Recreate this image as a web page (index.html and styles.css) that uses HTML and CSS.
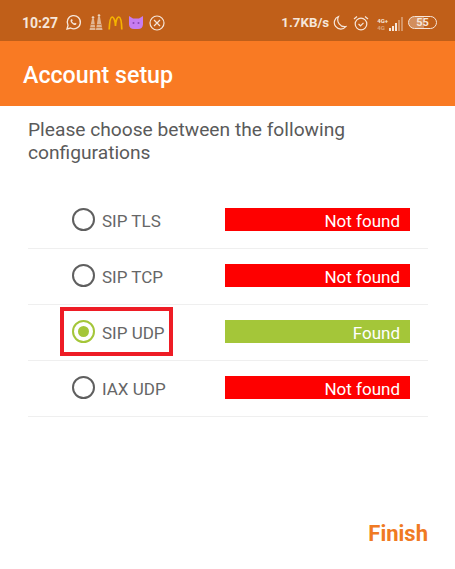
FILE: index.html
```html
<!DOCTYPE html>
<html lang="en">
<head>
    <meta charset="UTF-8">
    <meta name="viewport" content="width=device-width, initial-scale=1.0">
    <title>Account setup</title>
    <link rel="stylesheet" href="styles.css">
</head>
<body>
<div class="status-bar">
    <div class="status-left">
        <span class="status-time">10:27</span>
        <svg class="ic" width="17" height="17" viewBox="0 0 17 17" fill="none" stroke="#f6e6da" stroke-width="1.3"><path d="M2 15l1-3.600A6.600 6.600 0 1 1 5.600 14z"/><path d="M6 5.500c-.8.8-.6 2 .6 3.400s2.600 2.300 3.700 2.100c.8-.2 1.200-.8 1.200-1.400l-1.600-.8-.7.7c-.9-.3-1.800-1.200-2.200-2.200l.7-.7-.7-1.500z" fill="#f6e6da" stroke="none"/></svg>
        <svg class="ic ic-people" width="14" height="17" viewBox="0 0 14 17" fill="#ecd3bd"><path d="M3 5h2l1.500 11H.5z" opacity=".75"/><path d="M9 3h2l2.500 13H7z" opacity=".75"/><circle cx="4" cy="3.500" r="1.300"/><circle cx="10" cy="1.500" r="1.300"/><path d="M1 13h12v1H1zM2 10h10v1H2z" fill="#c05f19" opacity=".6"/></svg>
        <svg class="ic ic-mc" width="15" height="14" viewBox="0 0 15 14" fill="none" stroke="#f5b400" stroke-width="1.700"><path d="M1.200 13.500C1.500 6 2.500 1 4.200 1S7.500 6 7.500 10C7.500 6 9 1 10.800 1s2.800 5 3 12.500"/></svg>
        <svg class="ic ic-cat" width="16" height="15" viewBox="0 0 16 15"><path d="M1 1l4 2.500h6L15 1v8.500a5 5 0 0 1-5 4.500H6a5 5 0 0 1-5-4.500z" fill="#c77df0"/><circle cx="5.500" cy="8" r="1" fill="#8a45b5"/><circle cx="10.500" cy="8" r="1" fill="#8a45b5"/></svg>
        <svg class="ic" width="16" height="16" viewBox="0 0 16 16" fill="none" stroke="#f6e6da" stroke-width="1.200"><circle cx="8" cy="8" r="7"/><path d="M5 5l6 6M11 5l-6 6"/></svg>
    </div>
    <div class="status-right">
        <span class="status-speed">1.7KB/s</span>
        <svg class="ic" width="15" height="16" viewBox="0 0 15 16" fill="none" stroke="#f6e6da" stroke-width="1.200"><path d="M6.500 1.500a6.500 6.500 0 1 0 7.500 10A7 7 0 0 1 6.500 1.500z"/></svg>
        <svg class="ic ic-alarm" width="16" height="16" viewBox="0 0 16 16" fill="none" stroke="#f6e6da" stroke-width="1.200"><circle cx="8" cy="9" r="5.800"/><path d="M5.500 9l2 1.800 3-3M1 4l3-2.500M15 4l-3-2.500"/></svg>
        <div class="signal">
            <div class="signal-labels"><span>4G+</span><span class="dim">4G</span></div>
            <div class="signal-bars">
                <i class="h1"></i><i class="h2"></i><i class="h3"></i><i class="h4 dim-bar"></i><i class="h5 dim-bar"></i>
            </div>
        </div>
        <div class="battery">55</div>
    </div>
</div>

<div class="app-bar">Account setup</div>

<div class="content">
    <p class="intro">Please choose between the following configurations</p>

    <div class="config-list">
        <div class="config-row">
            <span class="radio"></span>
            <span class="config-name">SIP TLS</span>
            <span class="config-state not-found">Not found</span>
        </div>
        <div class="config-row">
            <span class="radio"></span>
            <span class="config-name">SIP TCP</span>
            <span class="config-state not-found">Not found</span>
        </div>
        <div class="config-row">
            <span class="radio checked"></span>
            <span class="config-name">SIP UDP</span>
            <span class="config-state found">Found</span>
            <span class="highlight"></span>
        </div>
        <div class="config-row">
            <span class="radio"></span>
            <span class="config-name">IAX UDP</span>
            <span class="config-state not-found">Not found</span>
        </div>
    </div>
</div>

<div class="footer">
    <a href="#" class="finish">Finish</a>
</div>
</body>
</html>
```

FILE: styles.css
```css
* {
    box-sizing: border-box;
}
body {
    margin: 0;
    height: 569px;
    background: #fff;
    font-family: Roboto, "Liberation Sans", sans-serif;
    overflow: hidden;
    display: flex;
    flex-direction: column;
}
.status-bar {
    height: 41px;
    background: #c05f19;
    color: #f6e6da;
    display: flex;
    justify-content: space-between;
    align-items: center;
    padding: 4px 18px 0 22px;
    flex: none;
}
.status-left,
.status-right {
    display: flex;
    align-items: center;
}
.status-time {
    font-size: 14px;
    font-weight: 700;
    margin-right: 7px;
}
.status-speed {
    font-size: 13.300px;
    font-weight: 700;
    margin-right: 3px;
}
.ic {
    display: block;
    margin-right: 5px;
}
.ic-people {
    margin-left: 2px;
    margin-right: 5px;
}
.ic-alarm {
    margin-left: 1px;
    margin-right: 8px;
}
.signal {
    display: flex;
    align-items: flex-end;
    height: 16px;
    margin-right: 5px;
}
.signal-labels {
    display: flex;
    flex-direction: column;
    font-size: 6px;
    font-weight: 700;
    line-height: 7px;
    margin-right: 1px;
}
.signal-labels .dim {
    opacity: .5;
}
.signal-bars {
    display: flex;
    align-items: flex-end;
    gap: 1px;
}
.signal-bars i {
    display: block;
    width: 2px;
    background: #f6e6da;
}
.signal-bars .h1 { height: 3px; }
.signal-bars .h2 { height: 5px; }
.signal-bars .h3 { height: 8px; }
.signal-bars .h4 { height: 11px; }
.signal-bars .h5 { height: 14px; }
.signal-bars .dim-bar {
    opacity: .4;
}
.battery {
    width: 29px;
    height: 13px;
    border: 1px solid #f6e6da;
    border-radius: 7px;
    font-size: 11px;
    font-weight: 700;
    line-height: 11px;
    text-align: center;
    background: linear-gradient(90deg, rgba(246,230,218,.35) 55%, transparent 55%);
}
.app-bar {
    height: 65px;
    background: #f97a23;
    color: #fff;
    font-size: 23.200px;
    font-weight: 500;
    line-height: 69px;
    padding-left: 23px;
    flex: none;
}
.content {
    padding: 12px 27px 0 28px;
    flex: 1;
}
.intro {
    margin: 0 0 29px;
    font-size: 19.200px;
    line-height: 23px;
    color: #5a5a5a;
}
.config-row {
    position: relative;
    height: 56px;
    display: flex;
    align-items: center;
    padding-left: 44px;
    padding-bottom: 2px;
    border-bottom: 1px solid #efefef;
}
.radio {
    width: 23px;
    height: 23px;
    border: 2px solid #5f5f5f;
    border-radius: 50%;
    display: flex;
    align-items: center;
    justify-content: center;
    flex: none;
}
.radio.checked {
    border-color: #a4c639;
}
.radio.checked:after {
    content: '';
    width: 11px;
    height: 11px;
    border-radius: 50%;
    background: #a4c639;
}
.config-name {
    width: 130px;
    padding-left: 7px;
    padding-top: 2px;
    font-size: 17px;
    color: #666;
}
.config-state {
    width: 185px;
    height: 23px;
    line-height: 26px;
    padding-right: 10px;
    text-align: right;
    font-size: 17px;
    color: #fff;
}
.not-found {
    background: #fe0000;
}
.found {
    background: #a4c639;
}
.highlight {
    position: absolute;
    left: 32px;
    top: 2px;
    width: 113px;
    height: 49px;
    border: 4px solid #ee1c25;
}
.footer {
    padding: 0 27px 23px 0;
    text-align: right;
    flex: none;
}
.finish {
    color: #f07a23;
    font-size: 22px;
    font-weight: 700;
    text-decoration: none;
}
```
